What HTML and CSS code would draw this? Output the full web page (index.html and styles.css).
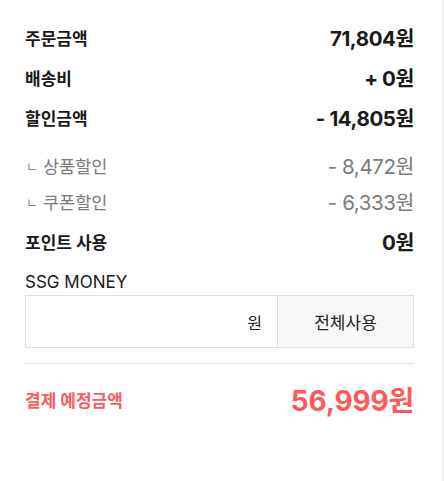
FILE: index.html
```html
<!DOCTYPE html>
<html lang="ko">
<head>
<meta charset="utf-8">
<link rel="stylesheet" href="styles.css">
</head>
<body>
<div class="panel">
  <div class="row main first"><span class="label">주문금액</span><span class="value">71,804원</span></div>
  <div class="row main"><span class="label">배송비</span><span class="value">+ 0원</span></div>
  <div class="row main"><span class="label">할인금액</span><span class="value">- 14,805원</span></div>
  <div class="row sub sub-first"><span class="label"><span class="corner">ㄴ</span>상품할인</span><span class="value">- 8,472원</span></div>
  <div class="row sub"><span class="label"><span class="corner">ㄴ</span>쿠폰할인</span><span class="value">- 6,333원</span></div>
  <div class="row main point"><span class="label">포인트 사용</span><span class="value">0원</span></div>
  <div class="money-label">SSG MONEY</div>
  <div class="money-box">
    <div class="money-input"><span class="unit">원</span></div>
    <div class="money-btn">전체사용</div>
  </div>
  <div class="divider"></div>
  <div class="row total"><span class="label">결제 예정금액</span><span class="value">56,999원</span></div>
</div>
</body>
</html>
```
FILE: styles.css
```css
* { box-sizing: border-box; }
html, body { margin: 0; padding: 0; background: #fff; }
body {
  font-family: Inter, "Noto Sans CJK KR", sans-serif;
  color: #1a1a1a;
}
.panel {
  width: 444px;
  height: 481px;
  padding: 17px 28px 0 25px;
  border-right: 2px solid #f0f0f0;
}
.row {
  display: flex;
  justify-content: space-between;
  align-items: center;
}
.main { height: 40px; }
.main .label { font-size: 17px; font-weight: 700; }
.main .value { font-size: 20.5px; font-weight: 700; letter-spacing: -0.4px; }
.sub { height: 36px; color: #7a7a7a; }
.sub-first { margin-top: 10px; }
.sub .label { font-size: 17.5px; font-weight: 400; display: flex; align-items: center; }
.corner { font-size: 13px; margin: 0 5px 0 1px; color: #888; }
.sub .value { font-size: 20.5px; font-weight: 400; color: #7b7b7b; letter-spacing: -0.4px; }
.point { margin-top: 2px; }
.money-label {
  font-size: 17px;
  line-height: 20px;
  margin-top: 11px;
  color: #1a1a1a;
}
.money-box {
  display: flex;
  height: 53px;
  margin-top: 3px;
  border: 1px solid #dedede;
}
.money-input {
  flex: 1;
  display: flex;
  align-items: center;
  justify-content: flex-end;
  padding-right: 15px;
  background: #fff;
}
.unit { font-size: 16px; color: #222; }
.money-btn {
  width: 136px;
  border-left: 1px solid #dedede;
  background: #f8f8f8;
  display: flex;
  align-items: center;
  justify-content: center;
  font-size: 17px;
  color: #222;
}
.divider {
  height: 1px;
  background: #e3e3e3;
  margin-top: 15px;
}
.total { height: 70px; color: #ff5a5a; }
.total .label { font-size: 17px; font-weight: 700; }
.total .value { font-size: 28px; font-weight: 700; letter-spacing: -0.2px; }
```
